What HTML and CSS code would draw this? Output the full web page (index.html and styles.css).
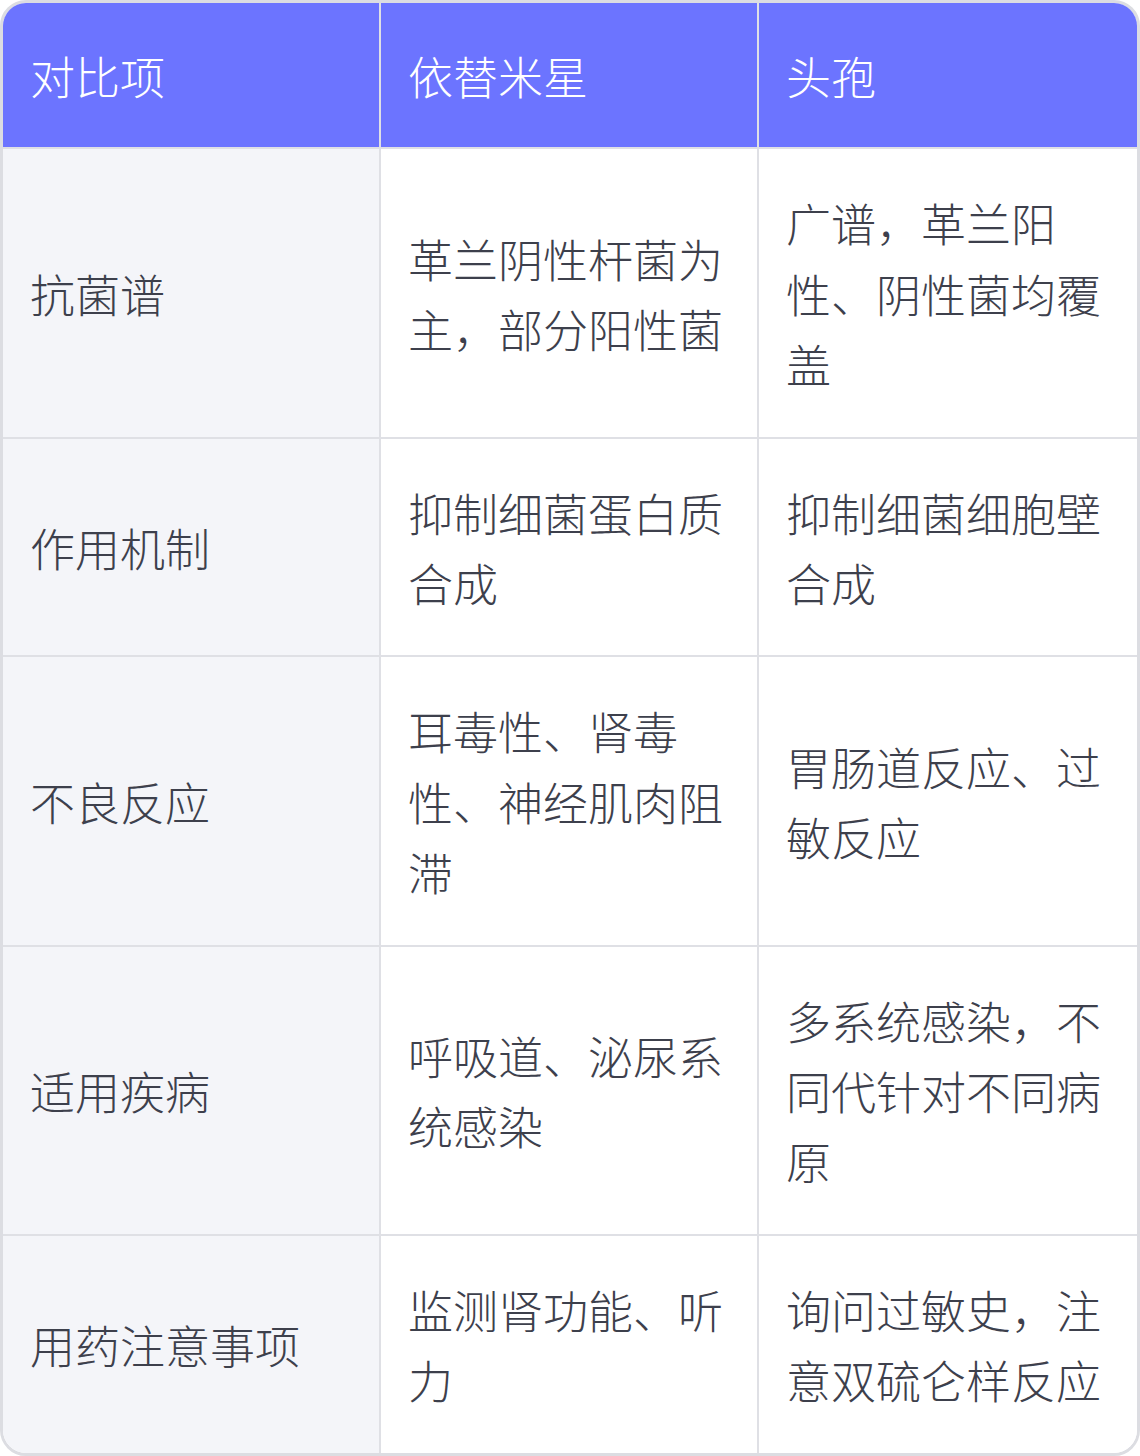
FILE: index.html
```html
<!DOCTYPE html>
<html lang="zh-CN">
<head>
<meta charset="utf-8">
<title>依替米星 vs 头孢</title>
<link rel="stylesheet" href="styles.css">
</head>
<body>
<div class="card">
  <table class="cmp">
    <thead>
      <tr>
        <th>对比项</th>
        <th>依替米星</th>
        <th>头孢</th>
      </tr>
    </thead>
    <tbody>
      <tr>
        <td class="key">抗菌谱</td>
        <td>革兰阴性杆菌为主，部分阳性菌</td>
        <td>广谱，革兰阳性、阴性菌均覆盖</td>
      </tr>
      <tr>
        <td class="key">作用机制</td>
        <td>抑制细菌蛋白质合成</td>
        <td>抑制细菌细胞壁合成</td>
      </tr>
      <tr>
        <td class="key">不良反应</td>
        <td>耳毒性、肾毒性、神经肌肉阻滞</td>
        <td>胃肠道反应、过敏反应</td>
      </tr>
      <tr>
        <td class="key">适用疾病</td>
        <td>呼吸道、泌尿系统感染</td>
        <td>多系统感染，不同代针对不同病原</td>
      </tr>
      <tr>
        <td class="key">用药注意事项</td>
        <td>监测肾功能、听力</td>
        <td>询问过敏史，注意双硫仑样反应</td>
      </tr>
    </tbody>
  </table>
</div>
</body>
</html>
```

FILE: styles.css
```css
html, body {
  margin: 0;
  padding: 0;
  background: #ffffff;
}

body {
  font-family: "Noto Sans CJK SC", "Noto Sans", sans-serif;
  font-weight: 300;
  color: #3d404c;
}

.card {
  width: 1140px;
  box-sizing: border-box;
  border: 3px solid #dcdde2;
  border-radius: 26px;
  overflow: hidden;
  background: #ffffff;
}

.cmp {
  width: 100%;
  border-collapse: separate;
  border-spacing: 0;
  table-layout: fixed;
  font-size: 45px;
  line-height: 70.4px;
}

.cmp th,
.cmp td {
  text-align: left;
  vertical-align: middle;
  border-right: 2px solid #dfe0e5;
  border-bottom: 2px solid #dfe0e5;
  word-break: break-all;
}

.cmp th:last-child,
.cmp td:last-child {
  border-right: none;
}

.cmp tbody tr:last-child td {
  border-bottom: none;
}

.cmp th {
  background: #6c74ff;
  color: #ffffff;
  font-weight: 300;
  padding: 38px 27px 36px;
}

.cmp td {
  padding: 39px 27px 37px;
  background: #ffffff;
}

.cmp td.key {
  background: #f4f5f9;
}
```
